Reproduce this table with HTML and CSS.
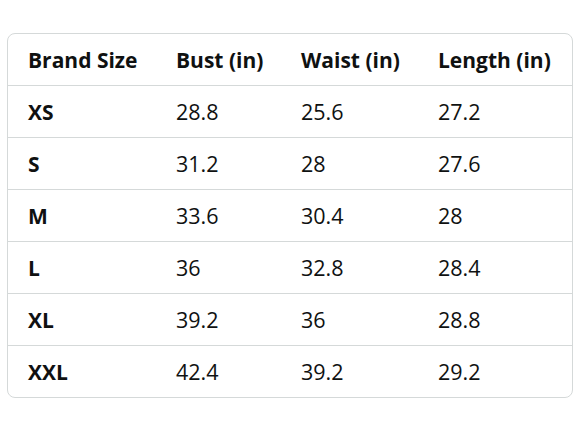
FILE: index.html
```html
<!DOCTYPE html>
<html>
<head>
<meta charset="utf-8">
<link rel="stylesheet" href="styles.css">
</head>
<body>
<div class="card">
<table class="size-table">
  <thead>
    <tr><th class="c1">Brand Size</th><th class="c2">Bust (in)</th><th class="c3">Waist (in)</th><th class="c4">Length (in)</th></tr>
  </thead>
  <tbody>
    <tr><th>XS</th><td>28.8</td><td>25.6</td><td>27.2</td></tr>
    <tr><th>S</th><td>31.2</td><td>28</td><td>27.6</td></tr>
    <tr><th>M</th><td>33.6</td><td>30.4</td><td>28</td></tr>
    <tr><th>L</th><td>36</td><td>32.8</td><td>28.4</td></tr>
    <tr><th>XL</th><td>39.2</td><td>36</td><td>28.8</td></tr>
    <tr><th>XXL</th><td>42.4</td><td>39.2</td><td>29.2</td></tr>
  </tbody>
</table>
</div>
</body>
</html>
```
FILE: styles.css
```css
html, body { margin: 0; background: #fff; }
body { padding: 33px 0 0 7px; font-family: "Open Sans", "Noto Sans", sans-serif; color: #0f1111; }
.card {
  width: 564px;
  border: 1px solid #d5d9d9;
  border-radius: 8px;
  overflow: hidden;
}
.size-table { width: 100%; border-collapse: collapse; table-layout: fixed; }
.size-table th, .size-table td {
  height: 51px;
  padding: 0 0 0 20px;
  text-align: left;
  line-height: 24px;
  vertical-align: middle;
  white-space: nowrap;
}
.size-table th { font-weight: 700; font-size: 21px; }
.size-table td { font-weight: 400; font-size: 21.5px; }
.size-table tbody th, .size-table tbody td { border-top: 1px solid #d5d9d9; }
.c1 { width: 128px; }
.c2 { width: 105px; }
.c3 { width: 117px; }
.c4 { width: auto; }
```
